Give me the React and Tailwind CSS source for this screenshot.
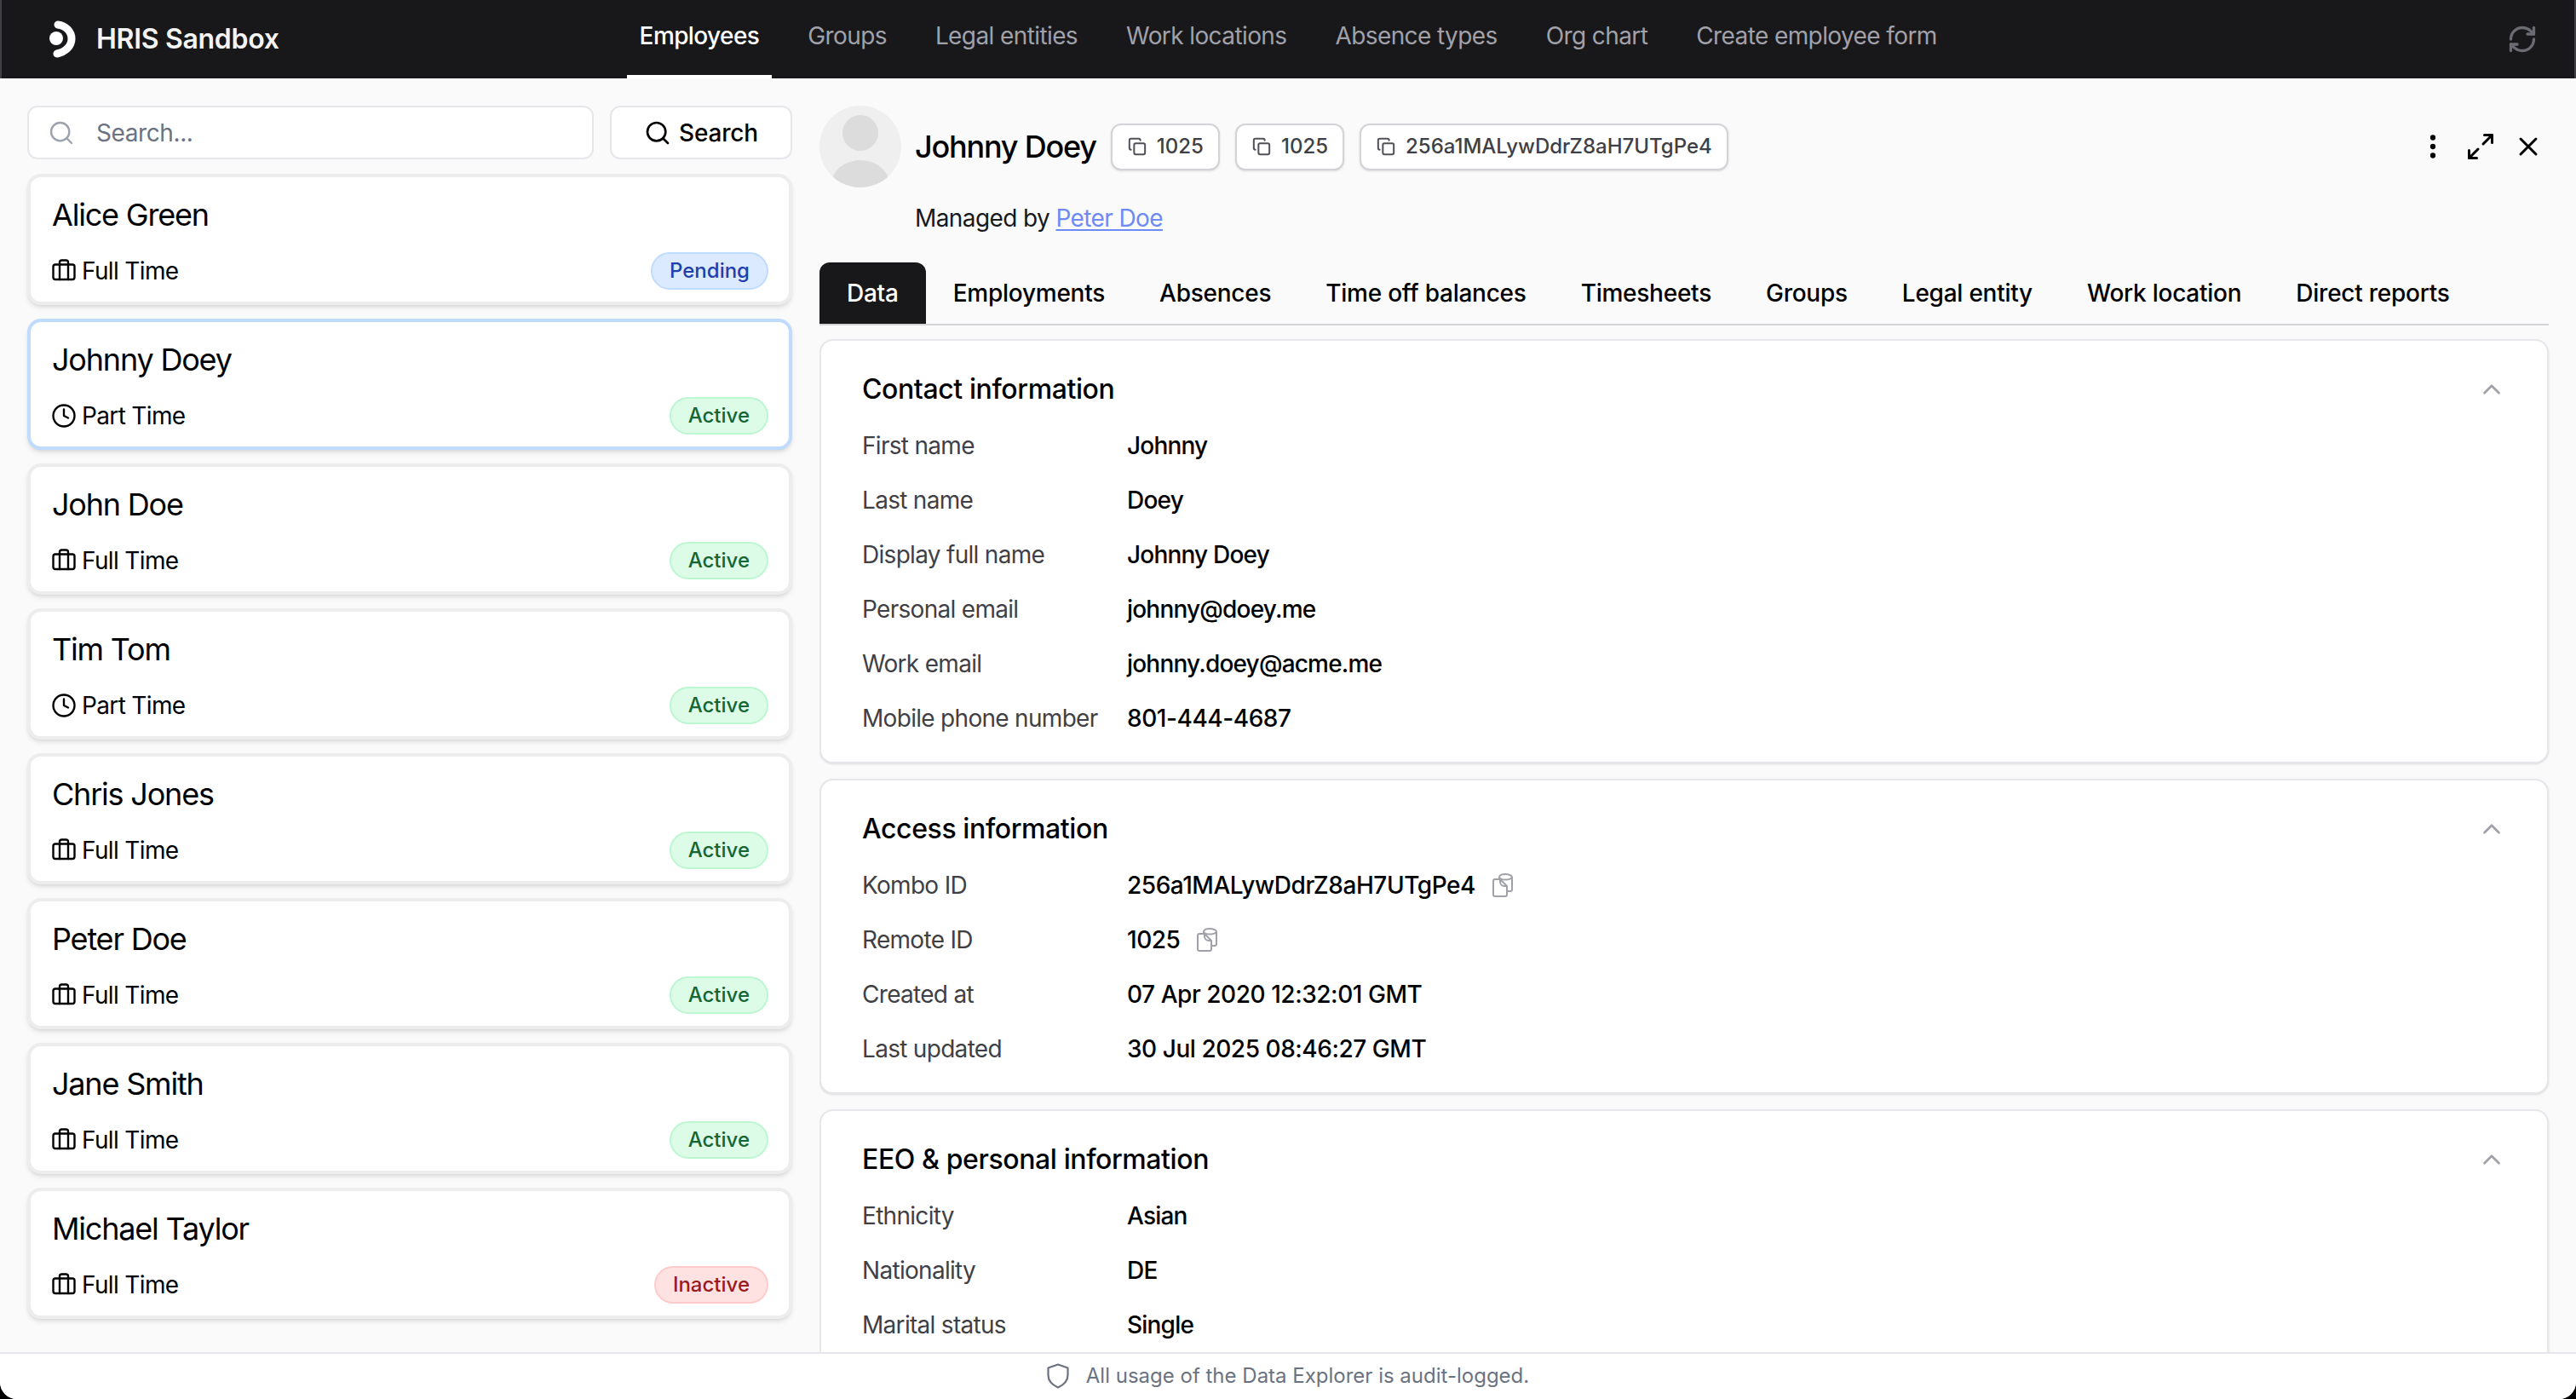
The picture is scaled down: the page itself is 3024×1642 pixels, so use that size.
import React from "react";
import { Search, Briefcase, Clock, Copy, EllipsisVertical, Maximize2, X, ChevronUp, RefreshCw } from "lucide-react";

const navItems = ["Employees", "Groups", "Legal entities", "Work locations", "Absence types", "Org chart", "Create employee form"];
const tabs = ["Data", "Employments", "Absences", "Time off balances", "Timesheets", "Groups", "Legal entity", "Work location", "Direct reports"];

const employees = [
  { name: "Alice Green", type: "Full Time", status: "Pending" },
  { name: "Johnny Doey", type: "Part Time", status: "Active", selected: true },
  { name: "John Doe", type: "Full Time", status: "Active" },
  { name: "Tim Tom", type: "Part Time", status: "Active" },
  { name: "Chris Jones", type: "Full Time", status: "Active" },
  { name: "Peter Doe", type: "Full Time", status: "Active" },
  { name: "Jane Smith", type: "Full Time", status: "Active" },
  { name: "Michael Taylor", type: "Full Time", status: "Inactive" },
];

const badgeStyles = {
  Pending: "bg-[#dbeafe] border-[#bfdbfe] text-[#1e40af]",
  Active: "bg-[#dcfce7] border-[#bbf7d0] text-[#166534]",
  Inactive: "bg-[#fee2e2] border-[#fecaca] text-[#991b1b]",
};

const sections = [
  {
    title: "Contact information",
    rows: [
      ["First name", "Johnny"],
      ["Last name", "Doey"],
      ["Display full name", "Johnny Doey"],
      ["Personal email", "johnny@doey.me"],
      ["Work email", "johnny.doey@acme.me"],
      ["Mobile phone number", "801-444-4687"],
    ],
  },
  {
    title: "Access information",
    rows: [
      ["Kombo ID", "256a1MALywDdrZ8aH7UTgPe4", true],
      ["Remote ID", "1025", true],
      ["Created at", "07 Apr 2020 12:32:01 GMT"],
      ["Last updated", "30 Jul 2025 08:46:27 GMT"],
    ],
  },
  {
    title: "EEO & personal information",
    rows: [
      ["Ethnicity", "Asian"],
      ["Nationality", "DE"],
      ["Marital status", "Single"],
    ],
  },
];

const Logo = () => (
  <svg width="32" height="44" viewBox="0 0 32 44" fill="none" className="shrink-0">
    <circle cx="9" cy="21" r="8" fill="#fff" />
    <path d="M11 5c9 1 16 8 16 16.500S20 37 10 39" stroke="#fff" strokeWidth="9" strokeLinecap="round" />
  </svg>
);

const CopyField = () => (
  <svg width="24" height="28" viewBox="0 0 24 28" fill="none" stroke="#a1a1aa" strokeWidth="2" className="shrink-0">
    <path d="M8 6V4.500C8 2.500 11 1 15 1s8 1.500 8 3.500V19a2 2 0 0 1-2 2h-3" strokeLinejoin="round" />
    <path d="M8 4.500C8 6 11 7.500 15 7.500s8-1.500 8-3" />
    <path d="M3 7h6l8 8v10a2 2 0 0 1-2 2H3a2 2 0 0 1-2-2V9a2 2 0 0 1 2-2z" fill="#fff" strokeLinejoin="round" />
    <path d="M9 7v3a5 5 0 0 0 5 5h3" />
  </svg>
);

const ShieldIcon = () => (
  <svg width="26" height="30" viewBox="0 0 26 30" fill="none" stroke="#6b7280" strokeWidth="2.2" strokeLinejoin="round" className="shrink-0">
    <path d="M13 1.500 24.500 5.500V14c0 7-5 11.500-11.500 14.500C6.500 25.500 1.500 21 1.500 14V5.500z" />
  </svg>
);

const Chip = ({ value }) => (
  <div className="flex h-[55px] items-center gap-[12px] rounded-xl border-2 border-[#d4d4d8] bg-white pl-[18px] pr-[17px] text-[24px] font-medium text-[#3f3f46] shadow-sm">
    <Copy size={22} strokeWidth={2.2} className="text-[#52525b]" />
    {value}
  </div>
);

const EmployeeCard = ({ employee }) => {
  const TypeIcon = employee.type === "Full Time" ? Briefcase : Clock;
  return (
    <div
      className={
        "flex h-[154px] shrink-0 flex-col rounded-2xl border-4 bg-white pl-[25px] pr-[24px] pt-[18px] shadow-md " +
        (employee.selected ? "border-[#bfdbfe]" : "border-[#ededee]")
      }
    >
      <div className="text-[36px] leading-[52px] tracking-[-1.2px] text-black">{employee.name}</div>
      <div className="mt-[18px] flex items-center justify-between">
        <div className="flex items-center gap-[6px] text-[28px] leading-[40px] tracking-[-0.65px] text-black">
          <TypeIcon size={30} strokeWidth={1.9} className="-ml-[1px]" />
          {employee.type}
        </div>
        <span className={"flex h-[44px] items-center rounded-full border-2 px-[20px] text-[24px] font-medium " + badgeStyles[employee.status]}>
          {employee.status}
        </span>
      </div>
    </div>
  );
};

const Section = ({ section }) => (
  <section className="shrink-0 rounded-2xl border-2 border-[#e5e7eb] bg-white pb-[31px] pl-[48px] pr-[48px] pt-[35px] shadow-sm">
    <div className="mb-6 flex h-[44px] items-center justify-between">
      <h2 className="text-[32px] font-medium tracking-[-0.4px] text-black">{section.title}</h2>
      <ChevronUp size={34} strokeWidth={1.9} className="text-[#a1a1aa]" />
    </div>
    <div className="flex flex-col gap-6">
      {section.rows.map(([label, value, copy]) => (
        <div key={label} className="flex h-10 items-center text-[28px]">
          <div className="w-[311px] shrink-0 tracking-[-0.7px] text-[#3f3f46]">{label}</div>
          <div className={"font-medium text-black " + (/\d/.test(value) ? "tracking-[-0.45px]" : "tracking-[-0.8px]")}>{value}</div>
          {copy && (
            <div className="ml-[20px]">
              <CopyField />
            </div>
          )}
        </div>
      ))}
    </div>
  </section>
);

export default function App() {
  return (
    <div className="h-screen w-full bg-black font-['Inter',sans-serif]">
      <div className="flex h-full flex-col overflow-hidden rounded-b-[20px] bg-[#fafafa]">
        {/* Top bar */}
        <header className="flex h-[92px] shrink-0 items-center border-x-2 border-[#3f3f46] bg-[#18181b] pl-[55px] pr-[43px]">
          <Logo />
          <span className="ml-[24px] text-[32px] font-semibold tracking-[-0.3px] text-[#f4f4f5]">HRIS Sandbox</span>
          <nav className="ml-[408px] flex h-full gap-[27px]">
            {navItems.map((item, i) => (
              <div
                key={item}
                className={
                  "flex items-center border-b-4 px-[15px] pb-[6px] pt-[2px] text-[28px] tracking-[-0.6px] " +
                  (i === 0 ? "border-white font-medium text-white" : "border-transparent text-[#a1a1aa]")
                }
              >
                {item}
              </div>
            ))}
          </nav>
          <RefreshCw size={36} strokeWidth={2.2} className="ml-auto text-[#6b6b73]" />
        </header>

        <main className="flex min-h-0 flex-1">
          {/* Employee list */}
          <aside className="flex w-[962px] shrink-0 flex-col overflow-hidden pl-[32px] pr-[32px] pt-8">
            <div className="mb-[17px] flex h-[63px] shrink-0 gap-[19px]">
              <div className="flex flex-1 items-center gap-[25px] rounded-xl border-2 border-[#e5e7eb] bg-white pl-[22px]">
                <Search size={32} strokeWidth={1.8} className="text-[#9ca3af]" />
                <span className="text-[28px] tracking-[-0.4px] text-[#6b7280]">Search...</span>
              </div>
              <button className="flex w-[214px] items-center justify-center gap-[9px] rounded-xl border-2 border-[#e5e7eb] bg-white text-[28px] font-medium tracking-[-0.2px] text-black">
                <Search size={32} strokeWidth={2} />
                Search
              </button>
            </div>
            <div className="flex flex-col gap-4">
              {employees.map((employee) => (
                <EmployeeCard key={employee.name} employee={employee} />
              ))}
            </div>
          </aside>

          {/* Employee detail */}
          <div className="flex min-w-0 flex-1 flex-col overflow-hidden pr-8 pt-8">
            <div className="flex h-[96px] shrink-0 items-center">
              <svg width="96" height="96" viewBox="0 0 96 96" className="shrink-0">
                <defs>
                  <clipPath id="avatar">
                    <circle cx="48" cy="48" r="48" />
                  </clipPath>
                </defs>
                <circle cx="48" cy="48" r="48" fill="#efefef" />
                <g clipPath="url(#avatar)" fill="#dcdcdc">
                  <circle cx="48" cy="32" r="21" />
                  <ellipse cx="48" cy="92" rx="34" ry="28" />
                </g>
              </svg>
              <h1 className="ml-[16px] mr-[17px] text-[36px] font-medium tracking-[-1.2px] text-black">Johnny Doey</h1>
              <div className="flex gap-[18px]">
                <Chip value="1025" />
                <Chip value="1025" />
                <Chip value="256a1MALywDdrZ8aH7UTgPe4" />
              </div>
              <div className="ml-auto flex items-center gap-[20px] pr-[6px] text-black">
                <EllipsisVertical size={36} strokeWidth={2.2} />
                <Maximize2 size={36} strokeWidth={2} />
                <X size={36} strokeWidth={2} />
              </div>
            </div>
            <div className="ml-[112px] mt-[16px] h-10 text-[28px] leading-10 tracking-[-0.6px] text-[#18181b]">
              Managed by <span className="text-[#6d8bf5] underline underline-offset-[3px]">Peter Doe</span>
            </div>
            <div className="mt-[32px] flex h-[74px] shrink-0 border-b-2 border-[#d4d4d8]">
              {tabs.map((tab, i) => (
                <div
                  key={tab}
                  className={
                    "flex items-center rounded-t-xl px-8 text-[28px] font-medium tracking-[-0.25px] " +
                    (i === 0 ? "bg-[#18181b] text-white" : "text-black")
                  }
                >
                  {tab}
                </div>
              ))}
            </div>
            <div className="mt-4 flex min-h-0 flex-col gap-[18px]">
              {sections.map((section) => (
                <Section key={section.title} section={section} />
              ))}
            </div>
          </div>
        </main>

        <footer className="relative z-10 flex h-[55px] shrink-0 items-center justify-center gap-[20px] border-t-2 border-[#e5e7eb] bg-white pb-[2px] text-[24px] text-[#6b7280]">
          <ShieldIcon />
          All usage of the Data Explorer is audit-logged.
        </footer>
      </div>
    </div>
  );
}
